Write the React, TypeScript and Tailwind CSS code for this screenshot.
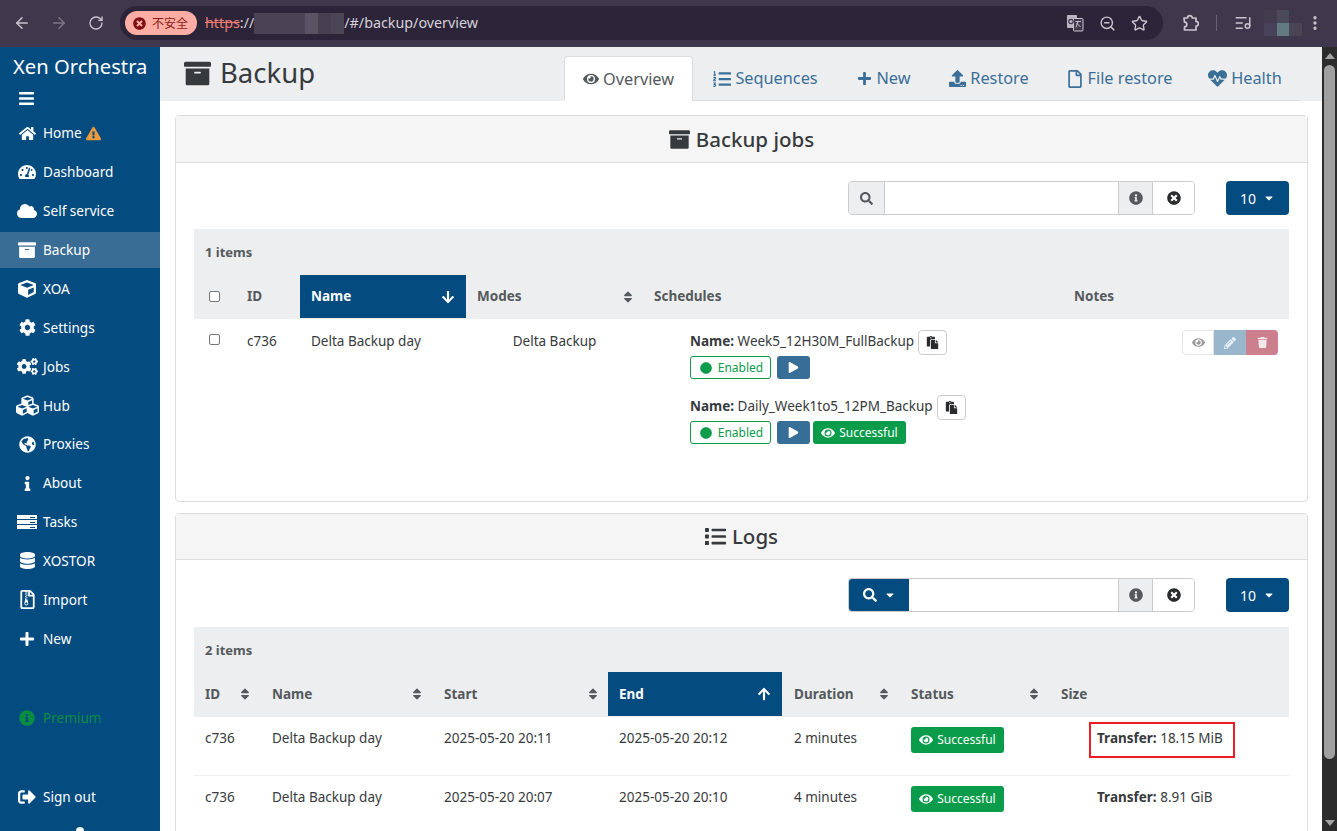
import type { ReactNode } from "react"
import { ArrowLeft, ArrowRight, RotateCw, ZoomOut, Star, ListMusic, MoreVertical } from "lucide-react"
import {
  FaArchive, FaArrowDown, FaArrowUp, FaBars, FaCaretDown, FaCircle, FaCloud, FaCog, FaCogs, FaCube, FaCubes, FaDatabase,
  FaExclamationTriangle, FaEye, FaGlobeAmericas, FaHeartbeat, FaHome, FaInfo, FaInfoCircle, FaList, FaListOl, FaPaste,
  FaPencilAlt, FaPlay, FaPlus, FaRegFile, FaRegFileArchive, FaSearch, FaSignOutAlt, FaSort, FaTachometerAlt, FaTimesCircle,
  FaTrash, FaUpload,
} from "react-icons/fa"

function TasksIcon() {
  return (
    <svg viewBox="0 0 20 16" className="h-[16px] w-[20px]" fill="white">
      <path d="M0 1h20v4H13v-1h5v-1h-5v2H0zM0 6h20v4H13v-1h5v-1h-5v2H0zM0 11h20v4H13v-1h5v-1h-5v2H0z" />
    </svg>
  )
}

function TranslateIcon() {
  return (
    <svg viewBox="0 0 18 18" className="h-[18px] w-[18px]">
      <rect x="1" y="1" width="10" height="13" rx="1" fill="#b9b5c0" />
      <rect x="7.5" y="4.5" width="9.5" height="12.5" rx="1" fill="#3f384d" stroke="#c9c5cf" />
      <path d="M9.5 7.5h5.5M12 7.5l-2 6M10.5 9l4 4" stroke="#c9c5cf" fill="none" />
      <circle cx="5" cy="7.5" r="2.2" fill="none" stroke="#3f384d" strokeWidth="1.2" />
    </svg>
  )
}

function ExtensionIcon() {
  return (
    <svg viewBox="0 0 18 18" className="ml-[18px] h-[18px] w-[18px]" fill="none" stroke="currentColor" strokeWidth="1.7" strokeLinejoin="round">
      <path d="M3 4h3.5a2.4 2.4 0 0 1 4.8 0H15v3.4a2.4 2.4 0 0 1 0 4.8V16H3.5v-3.2a2.3 2.3 0 0 0 0-4.6z" />
    </svg>
  )
}

const navItems: { label: string; icon: ReactNode; active?: boolean; warn?: boolean }[] = [
  { label: "Home", icon: <FaHome size={17} />, warn: true },
  { label: "Dashboard", icon: <FaTachometerAlt size={18} /> },
  { label: "Self service", icon: <FaCloud size={20} /> },
  { label: "Backup", icon: <FaArchive size={18} />, active: true },
  { label: "XOA", icon: <FaCube size={18} /> },
  { label: "Settings", icon: <FaCog size={17} /> },
  { label: "Jobs", icon: <FaCogs size={21} /> },
  { label: "Hub", icon: <FaCubes size={23} /> },
  { label: "Proxies", icon: <FaGlobeAmericas size={17} /> },
  { label: "About", icon: <FaInfo size={15} /> },
  { label: "Tasks", icon: <TasksIcon /> },
  { label: "XOSTOR", icon: <FaDatabase size={17} /> },
  { label: "Import", icon: <FaRegFileArchive size={19} /> },
  { label: "New", icon: <FaPlus size={16} /> },
]

function NavRow({ icon, label, active, warn }: { icon: ReactNode; label: string; active?: boolean; warn?: boolean }) {
  return (
    <div className={`flex h-[36px] items-center pl-[15px] text-[13.6px] text-white ${active ? "bg-[#3a6d96]" : ""}`}>
      <span className="flex w-[24px] justify-center">{icon}</span>
      <span className="ml-[4px] pt-[1px]">{label}</span>
      {warn && <FaExclamationTriangle size={15} className="ml-[4px] text-[#ec9a3c]" />}
    </div>
  )
}

function Sidebar() {
  return (
    <aside className="relative flex w-[160px] shrink-0 flex-col overflow-hidden bg-[#044b7f]">
      <div className="pl-[13px] pt-[3px] text-[20.2px] leading-[32px] text-white">Xen Orchestra</div>
      <div className="mt-[8px] pl-[18px] text-white">
        <FaBars size={17} />
      </div>
      <nav className="mt-[8px] flex flex-col gap-[2.9px]">
        {navItems.map((item) => (
          <NavRow key={item.label} {...item} />
        ))}
      </nav>
      <div className="mt-[43px] flex h-[36px] items-center pl-[15px] text-[13.6px] text-[#0b8c43]">
        <span className="flex w-[24px] justify-center">
          <FaInfoCircle size={16} />
        </span>
        <span className="ml-[4px] pt-[1px]">Premium</span>
      </div>
      <div className="mt-[43px]">
        <NavRow icon={<FaSignOutAlt size={18} />} label="Sign out" />
      </div>
      <div className="absolute left-[76px] top-[780px] h-[8px] w-[8px] rounded-full bg-white" />
    </aside>
  )
}

function BrowserBar() {
  return (
    <header className="flex h-[47px] shrink-0 items-center bg-[#3f384d] px-[13px] pb-[1px] text-[#c9c5cf]">
      <ArrowLeft size={18} strokeWidth={2} />
      <ArrowRight size={18} strokeWidth={2} className="ml-[19px] text-[#7b7586]" />
      <RotateCw size={16} strokeWidth={2} className="ml-[20px]" />
      <div className="ml-[16px] flex h-[34px] w-[1043px] items-center rounded-full bg-[#2c2438] pl-[5px] pr-[15px]">
        <div className="flex h-[24px] w-[72px] items-center rounded-full bg-[#fdada3] pl-[8px] text-[12px] text-[#8c1d18]">
          <FaTimesCircle size={13} className="text-[#7d0f14]" />
          <span className="ml-[6px] font-['Noto_Sans_CJK_SC',sans-serif]">不安全</span>
        </div>
        <div className="ml-[8px] flex items-center text-[14.3px] text-[#d5d1da]">
          <span className="text-[#ef7f74] line-through">https</span>
          <span>://</span>
          <div className="flex h-[21px] w-[90px]">
            <div className="w-[51px] bg-[#4a4255]" />
            <div className="w-[13px] bg-[#5a5363]" />
            <div className="w-[13px] bg-[#474050]" />
            <div className="w-[13px] bg-[#4c4556]" />
          </div>
          <span>/#/backup/overview</span>
        </div>
        <div className="ml-auto flex items-center gap-[15px]">
          <TranslateIcon />
          <ZoomOut size={17} strokeWidth={2} />
          <Star size={17} strokeWidth={2} />
        </div>
      </div>
      <ExtensionIcon />
      <div className="ml-[17px] h-[16px] w-px bg-[#6a6377]" />
      <ListMusic size={18} strokeWidth={2} className="ml-[17px]" />
      <div className="ml-[12px] grid h-[26px] w-[38px] grid-cols-3 grid-rows-2">
        <div className="bg-[#433c4f]" />
        <div className="bg-[#4a4a5a]" />
        <div className="bg-[#3f384d]" />
        <div className="bg-[#48435a]" />
        <div className="bg-[#637a80]" />
        <div className="bg-[#4a4555]" />
      </div>
      <MoreVertical size={18} strokeWidth={2.4} className="ml-[4px]" />
    </header>
  )
}

const tabs: { label: string; icon: ReactNode; active?: boolean; width: string }[] = [
  { label: "Overview", icon: <FaEye size={16} />, active: true, width: "w-[129px]" },
  { label: "Sequences", icon: <FaListOl size={18} />, width: "w-[145px]" },
  { label: "New", icon: <FaPlus size={15} />, width: "w-[92px]" },
  { label: "Restore", icon: <FaUpload size={17} />, width: "w-[118px]" },
  { label: "File restore", icon: <FaRegFile size={18} />, width: "w-[142px]" },
  { label: "Health", icon: <FaHeartbeat size={19} />, width: "w-[110px]" },
]

function PageHeader() {
  return (
    <div className="flex h-[54px] shrink-0 bg-[#eceeef] pl-[24px] pr-[22px]">
      <div className="flex items-center pb-[2px] text-[#373a3c]">
        <FaArchive size={27} />
        <h1 className="ml-[9px] text-[27.5px]">Backup</h1>
      </div>
      <div className="ml-auto flex h-[54px] items-end border-b border-[#dddddd]">
        {tabs.map((tab) => (
          <div
            key={tab.label}
            className={`mb-[-1px] flex h-[45px] items-center justify-center gap-[4px] text-[16.3px] ${tab.width} ${
              tab.active ? "rounded-t border border-b-0 border-[#dddddd] bg-white text-[#55595c]" : "text-[#3b6f97]"
            }`}
          >
            {tab.icon}
            <span>{tab.label}</span>
          </div>
        ))}
      </div>
    </div>
  )
}

function Card({ title, icon, headerHeight, children }: { title: string; icon: ReactNode; headerHeight: string; children: ReactNode }) {
  return (
    <section className="rounded border border-[#dddddd] bg-white">
      <div className={`flex items-center justify-center gap-[6px] border-b border-[#dddddd] bg-[#f5f5f5] text-[20.5px] text-[#373a3c] ${headerHeight}`}>
        {icon}
        <span className="font-medium">{title}</span>
      </div>
      <div className="px-[18px] pt-[18px]">{children}</div>
    </section>
  )
}

function Toolbar({ filled }: { filled?: boolean }) {
  return (
    <div className="flex h-[34px] justify-end text-[14px]">
      <div className="flex w-[347px] overflow-hidden rounded border border-[#cccccc]">
        {filled ? (
          <div className="m-[-1px] flex w-[62px] items-center justify-center gap-[7px] bg-[#044b7f] text-white">
            <FaSearch size={14} />
            <FaCaretDown size={12} />
          </div>
        ) : (
          <div className="flex w-[36px] items-center justify-center border-r border-[#cccccc] bg-[#eceeef] text-[#55595c]">
            <FaSearch size={13} />
          </div>
        )}
        <div className="flex-1 bg-white" />
        <div className="flex w-[35px] items-center justify-center border-x border-[#cccccc] bg-[#eceeef] text-[#55595c]">
          <FaInfoCircle size={14} />
        </div>
        <div className="flex w-[41px] items-center justify-center bg-white text-[#292b2c]">
          <FaTimesCircle size={14} />
        </div>
      </div>
      <div className="ml-[31px] flex w-[63px] items-center justify-center gap-[7px] rounded bg-[#044b7f] text-white">
        10 <FaCaretDown size={12} />
      </div>
    </div>
  )
}

function HeadCell({ label, sort, active, wide, arrow }: { label?: string; sort?: boolean; active?: boolean; wide?: boolean; arrow?: ReactNode }) {
  return (
    <div
      className={`flex items-center justify-between text-[13.5px] font-bold ${wide ? "pl-[12px]" : "pl-[11px]"} ${sort ? "pr-[8px]" : "pr-[11px]"} ${
        active ? "mb-[1px] bg-[#044b7f] text-white" : "pb-[1px] text-[#55595c]"
      }`}
    >
      <span>{label}</span>
      {sort && <FaSort size={14} className="text-[#55595c]" />}
      {arrow}
    </div>
  )
}

function Check() {
  return <div className="h-[11px] w-[11px] rounded-[2px] border border-[#767676] bg-white" />
}

function ScheduleName({ name }: { name: string }) {
  return (
    <div className="flex h-[24px] items-center text-[13.5px] text-[#373a3c]">
      <span>
        <b>Name:</b> {name}
      </span>
      <div className="ml-[4px] mt-[2px] flex h-[25px] w-[29px] items-center justify-center rounded border border-[#cccccc] text-[#292b2c]">
        <FaPaste size={13} />
      </div>
    </div>
  )
}

function EnabledRow({ success }: { success?: boolean }) {
  return (
    <div className="mt-[3px] flex h-[23px]">
      <div className="flex w-[81px] items-center justify-center gap-[6px] rounded-[3px] border border-[#0a9c4a] pl-[2px] text-[12px] text-[#0a9c4a]">
        <FaCircle size={12} />
        Enabled
      </div>
      <div className="ml-[6px] flex w-[33px] items-center justify-center rounded-[3px] bg-[#366e98] text-white">
        <FaPlay size={11} />
      </div>
      {success && (
        <div className="ml-[3px] flex w-[93px] items-center justify-center gap-[4px] rounded-[3px] bg-[#0a9c4a] text-[12px] text-white">
          <FaEye size={14} />
          Successful
        </div>
      )}
    </div>
  )
}

function BackupJobs() {
  return (
    <Card title="Backup jobs" icon={<FaArchive size={21} />} headerHeight="h-[47px]">
      <Toolbar />
      <div className="mt-[14px] bg-[#eceeef]">
        <div className="pl-[11px] pt-[14px] text-[13px] font-bold leading-[18px] text-[#55595c]">1 items</div>
        <div className="mt-[14px] grid h-[44px] grid-cols-[42px_64px_166px_177px_420px_226px]">
          <div className="flex items-center pb-[2px] pl-[15px]">
            <Check />
          </div>
          <HeadCell label="ID" />
          <HeadCell label="Name" active arrow={<FaArrowDown size={14} />} />
          <HeadCell label="Modes" sort />
          <HeadCell label="Schedules" />
          <HeadCell label="Notes" />
        </div>
      </div>
      <div className="grid h-[182px] grid-cols-[42px_64px_166px_177px_420px_226px] pt-[11px] text-[13.5px] leading-[22px] text-[#373a3c]">
        <div className="pl-[15px] pt-[4px]">
          <Check />
        </div>
        <div className="pl-[11px]">c736</div>
        <div className="pl-[11px]">Delta Backup day</div>
        <div className="text-center">Delta Backup</div>
        <div className="mt-[-1px] pl-[47px]">
          <ScheduleName name="Week5_12H30M_FullBackup" />
          <EnabledRow />
          <div className="mt-[15px]">
            <ScheduleName name="Daily_Week1to5_12PM_Backup" />
          </div>
          <EnabledRow success />
        </div>
        <div className="flex justify-end pr-[11px]">
          <div className="flex h-[25px]">
            <div className="flex w-[32px] items-center justify-center rounded-l border border-[#e5e5e5] text-[#9a9a9a]">
              <FaEye size={13} />
            </div>
            <div className="flex w-[32px] items-center justify-center bg-[#9ab6cc] text-[#e8eff4]">
              <FaPencilAlt size={12} />
            </div>
            <div className="flex w-[32px] items-center justify-center rounded-r bg-[#cc7f8d] text-[#f6e8ea]">
              <FaTrash size={11} />
            </div>
          </div>
        </div>
      </div>
    </Card>
  )
}

function LogRow({ start, end, duration, transfer, boxed }: { start: string; end: string; duration: string; transfer: string; boxed?: boolean }) {
  return (
    <div className="grid h-[58.5px] grid-cols-[66px_172px_176px_174px_117px_150px_240px] border-b border-[#eceeef] text-[13.5px] leading-[22px] text-[#373a3c]">
      <div className="pl-[11px] pt-[10px]">c736</div>
      <div className="pl-[12px] pt-[10px]">Delta Backup day</div>
      <div className="pl-[12px] pt-[10px]">{start}</div>
      <div className="pl-[11px] pt-[10px]">{end}</div>
      <div className="pl-[12px] pt-[10px]">{duration}</div>
      <div className="pl-[12px] pt-[10px]">
        <div className="flex h-[26px] w-[93px] items-center justify-center gap-[4px] rounded-[3px] bg-[#0a9c4a] text-[12px] text-white">
          <FaEye size={14} />
          Successful
        </div>
      </div>
      <div className="relative pl-[48px] pt-[10px]">
        <b>Transfer:</b> {transfer}
        {boxed && <div className="absolute left-[40px] top-[5px] h-[36px] w-[146px] border-2 border-[#ed1c24]" />}
      </div>
    </div>
  )
}

function Logs() {
  return (
    <Card title="Logs" icon={<FaList size={21} />} headerHeight="h-[46px]">
      <Toolbar filled />
      <div className="mt-[15px] bg-[#eceeef]">
        <div className="pl-[11px] pt-[14px] text-[13px] font-bold leading-[18px] text-[#55595c]">2 items</div>
        <div className="mt-[13px] grid h-[45px] grid-cols-[66px_172px_176px_174px_117px_150px_240px]">
          <HeadCell label="ID" sort />
          <HeadCell label="Name" sort wide />
          <HeadCell label="Start" sort wide />
          <HeadCell label="End" active arrow={<FaArrowUp size={14} />} />
          <HeadCell label="Duration" sort wide />
          <HeadCell label="Status" sort wide />
          <HeadCell label="Size" wide />
        </div>
      </div>
      <LogRow start="2025-05-20 20:11" end="2025-05-20 20:12" duration="2 minutes" transfer="18.15 MiB" boxed />
      <LogRow start="2025-05-20 20:07" end="2025-05-20 20:10" duration="4 minutes" transfer="8.91 GiB" />
    </Card>
  )
}

function Scrollbar() {
  return (
    <div className="flex w-[15px] shrink-0 flex-col items-center bg-[#2c2c2c]">
      <div className="mt-[6px] h-0 w-0 border-x-[5px] border-b-[6px] border-x-transparent border-b-[#a3a3a3]" />
      <div className="mt-[6px] h-[694px] w-[11px] rounded-full bg-[#9f9f9f]" />
      <div className="mt-auto mb-[5px] h-0 w-0 border-x-[5px] border-t-[6px] border-x-transparent border-t-[#a3a3a3]" />
    </div>
  )
}

export default function App() {
  return (
    <div className="flex h-[831px] w-[1337px] flex-col overflow-hidden bg-white font-['Noto_Sans',sans-serif]">
      <BrowserBar />
      <div className="flex min-h-0 flex-1">
        <Sidebar />
        <main className="flex min-w-0 flex-1 flex-col overflow-hidden">
          <PageHeader />
          <div className="flex flex-col gap-[11px] pl-[15px] pr-[14px] pt-[14px]">
            <BackupJobs />
            <Logs />
          </div>
        </main>
        <Scrollbar />
      </div>
    </div>
  )
}
